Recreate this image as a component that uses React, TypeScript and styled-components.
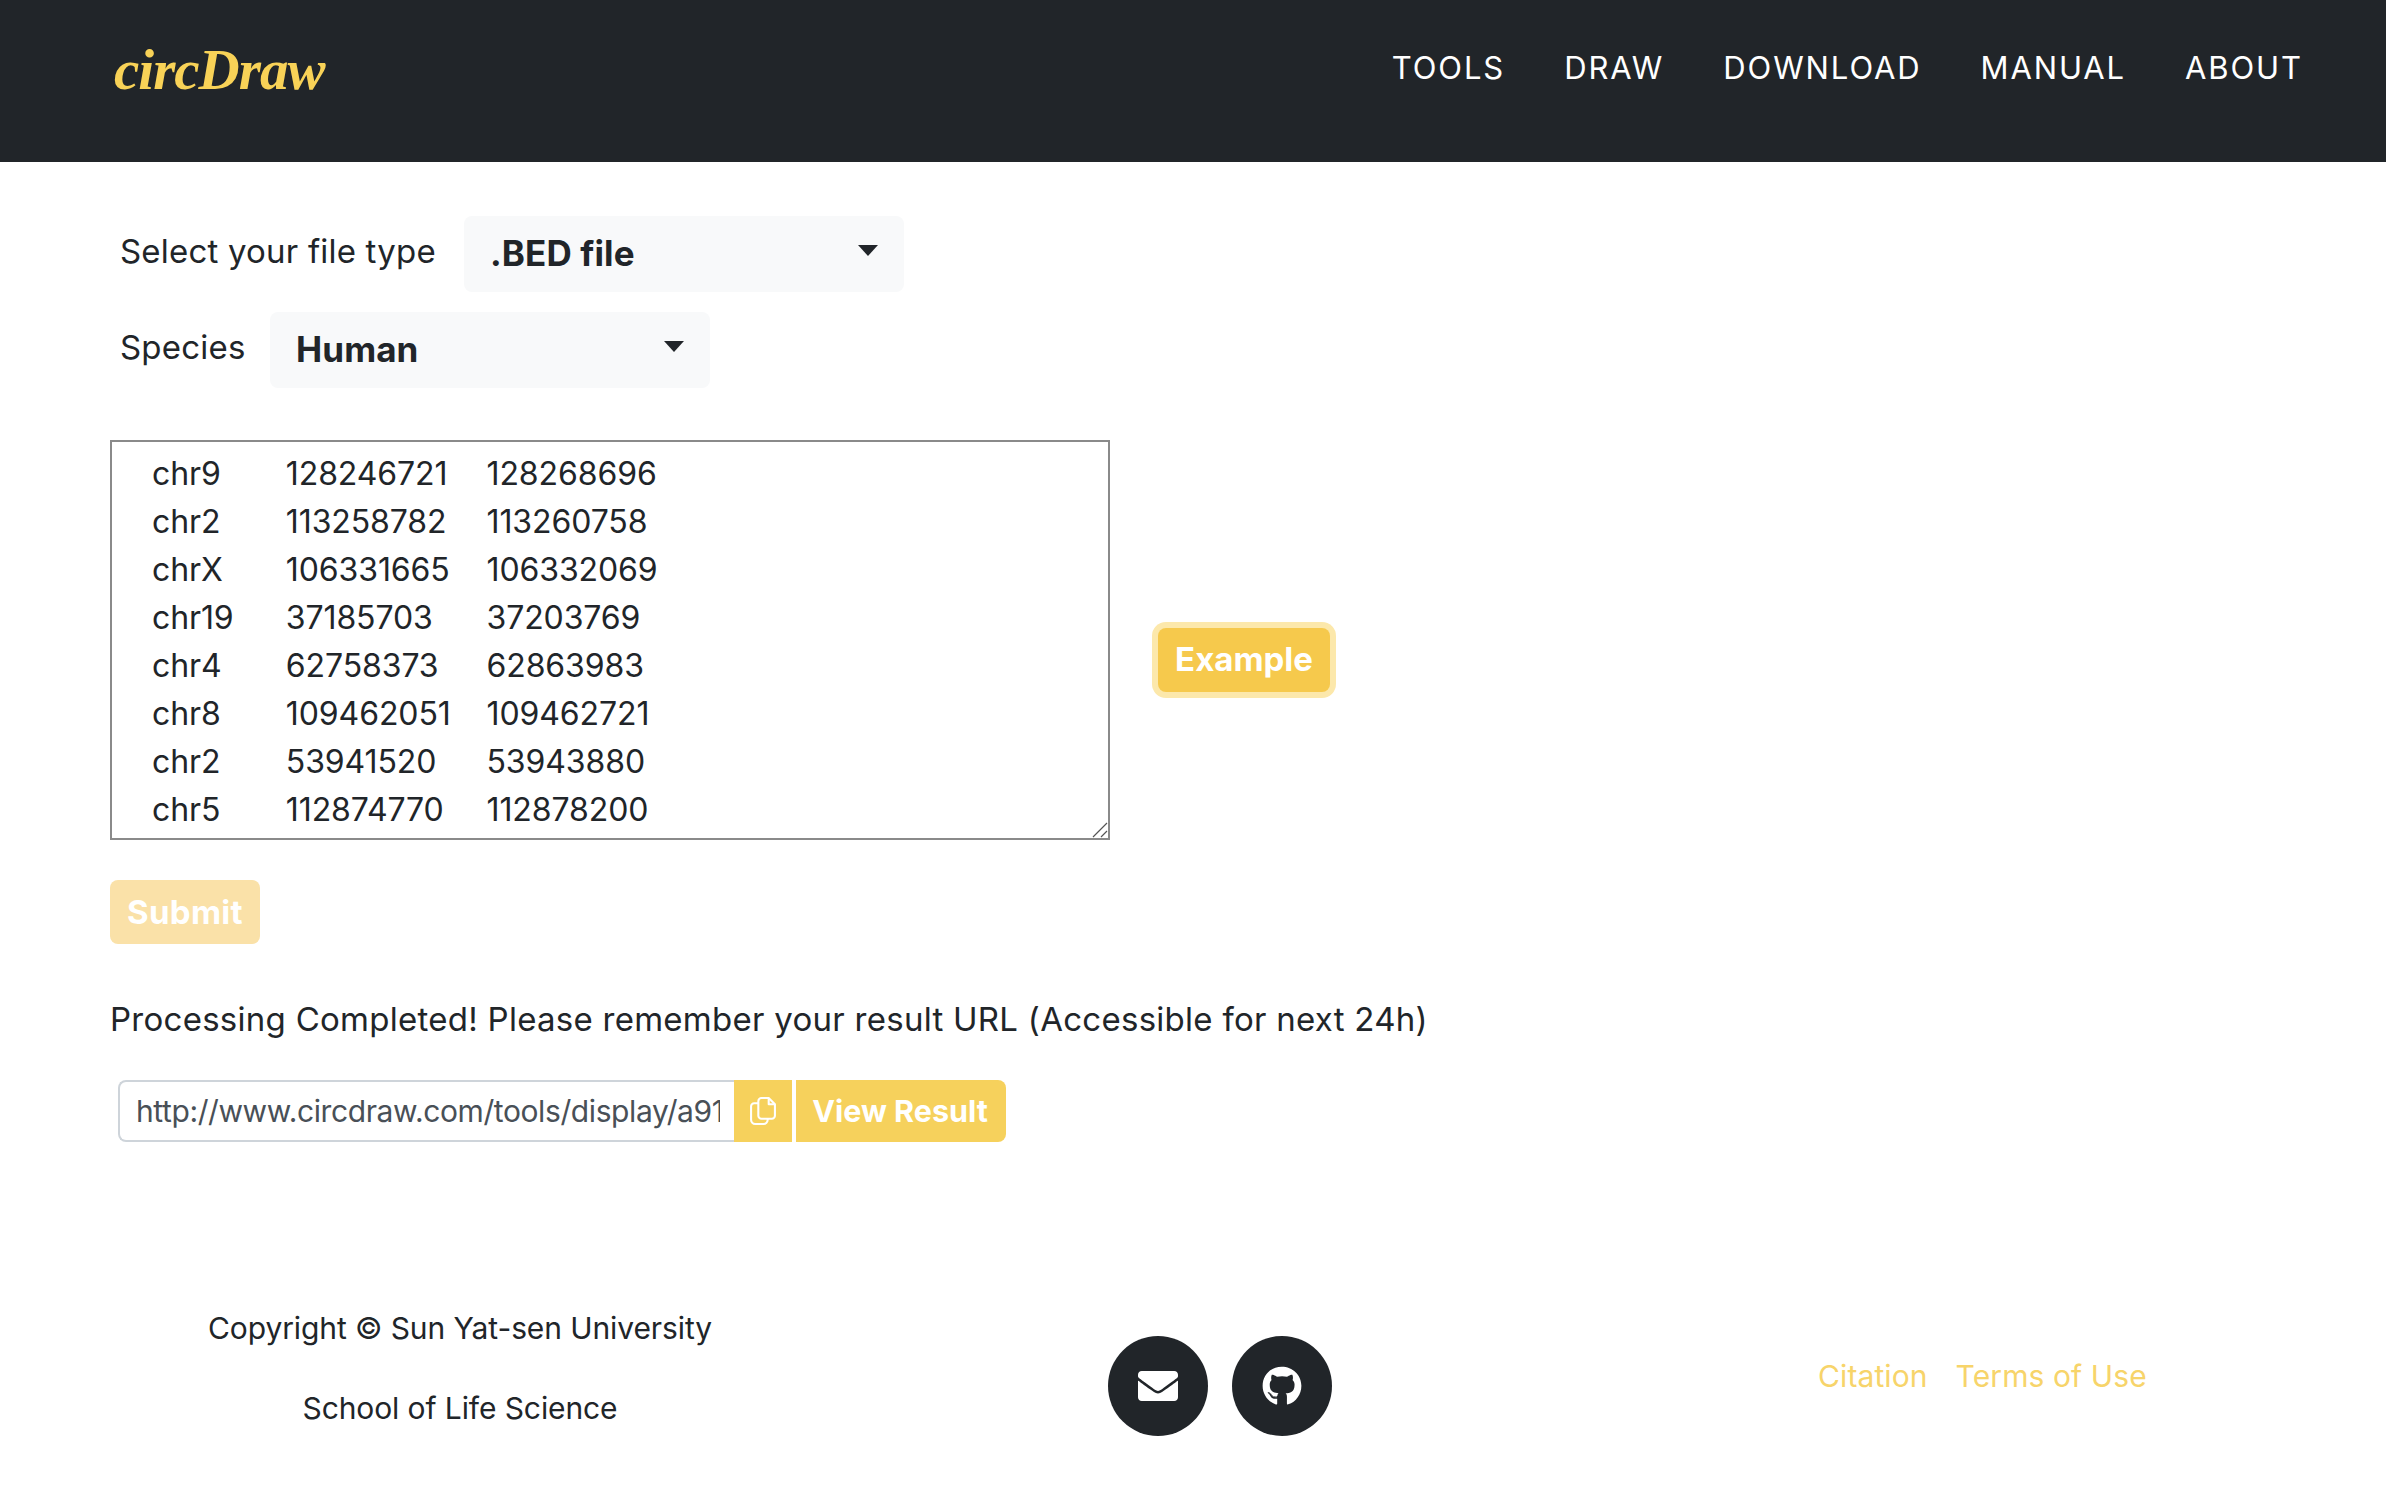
import React from "react";
import styled, { createGlobalStyle } from "styled-components";
import { FaEnvelope, FaGithub } from "react-icons/fa";

const FONT = `Inter, "Noto Sans", "Liberation Sans", sans-serif`;

const Global = createGlobalStyle`
  html, body { margin: 0; padding: 0; background: #fff; }
  body { font-family: ${FONT}; font-size: 32px; line-height: 48px; color: #212529; }
  * { box-sizing: border-box; }
`;

const Page = styled.div`
  width: 2386px;
  height: 1494px;
  overflow: hidden;
`;

const Header = styled.header`
  height: 162px;
  background: #212529;
  display: flex;
  justify-content: space-between;
  align-items: flex-start;
  padding: 40px 83px 0 114px;
`;

const Logo = styled.a`
  font-family: "Liberation Serif", serif;
  font-style: italic;
  font-weight: 700;
  font-size: 57px;
  line-height: 60px;
  letter-spacing: -1px;
  color: #f8d257;
`;

const Nav = styled.nav`
  display: flex;
  gap: 59px;
  padding-top: 4px;
`;

const NavLink = styled.a`
  font-size: 31px;
  line-height: 48px;
  letter-spacing: 1.9px;
  color: #fff;
`;

const Main = styled.main`
  padding: 54px 0 0 110px;
`;

const SelectRow = styled.div`
  display: flex;
  align-items: center;
  height: 76px;
  margin-bottom: 20px;
  padding-left: 10px;
`;

const FieldLabel = styled.label<{ $width: number }>`
  width: ${(p) => p.$width}px;
  flex: none;
  font-size: 33px;
  line-height: 48px;
  letter-spacing: 0.2px;
  position: relative;
  top: -3px;
`;

const SelectButton = styled.button`
  width: 440px;
  height: 76px;
  border: 0;
  border-radius: 8px;
  background: #f8f9fa;
  color: #212529;
  font-family: ${FONT};
  font-weight: 700;
  font-size: 35px;
  letter-spacing: 0.1px;
  display: flex;
  align-items: center;
  justify-content: space-between;
  padding: 0 26px 2px;
`;

const Caret = styled.span`
  width: 0;
  height: 0;
  border-left: 10px solid transparent;
  border-right: 10px solid transparent;
  border-top: 11px solid #212529;
  margin-top: -6px;
`;

const EditorRow = styled.div`
  display: flex;
  align-items: center;
  margin-top: 52px;
  gap: 48px;
`;

const SequenceFrame = styled.div`
  position: relative;
  width: 1000px;
  height: 400px;
  flex: none;
`;

const Sequence = styled.textarea`
  display: block;
  width: 100%;
  height: 100%;
  border: 2px solid #8a8a8a;
  border-radius: 0;
  padding: 8px 0 0 40px;
  font-family: ${FONT};
  font-size: 32px;
  line-height: 48px;
  letter-spacing: -0.1px;
  color: #212529;
  tab-size: 66.9px;
  white-space: pre;
  overflow: hidden;
  outline: none;
  background: #fff;
  resize: none;
`;

const ResizeGrip = styled.svg`
  position: absolute;
  right: 2px;
  bottom: 2px;
  width: 16px;
  height: 16px;
`;

const ExampleButton = styled.button`
  width: 172px;
  height: 64px;
  margin-top: 40px;
  border: 0;
  border-radius: 8px;
  background: #f6c94c;
  box-shadow: 0 0 0 6px #fce8ab;
  color: #fff;
  font-family: ${FONT};
  font-weight: 700;
  font-size: 33px;
  padding: 0 0 2px;
`;

const SubmitButton = styled.button`
  display: block;
  width: 150px;
  height: 64px;
  margin-top: 40px;
  border: 0;
  border-radius: 8px;
  background: #fae1a8;
  color: #fff;
  font-family: ${FONT};
  font-weight: 700;
  font-size: 33px;
  letter-spacing: 0.3px;
  padding: 0;
`;

const Notice = styled.p`
  margin: 51px 0 0;
  font-size: 33px;
  line-height: 48px;
  letter-spacing: 0.27px;
`;

const UrlGroup = styled.div`
  display: flex;
  width: 888px;
  height: 62px;
  margin: 37px 0 0 8px;
`;

const UrlInput = styled.input`
  width: 616px;
  height: 62px;
  flex: none;
  border: 2px solid #ced4da;
  border-right: 0;
  border-radius: 8px 0 0 8px;
  padding: 0 14px 0 16px;
  font-family: ${FONT};
  font-size: 30px;
  letter-spacing: -0.4px;
  color: #495057;
  outline: none;
  background: #fff;
`;

const CopyButton = styled.button`
  width: 58px;
  height: 62px;
  flex: none;
  border: 0;
  background: #f6d15c;
  color: #fff;
  padding: 0;
  display: flex;
  align-items: center;
  justify-content: center;
`;

const ResultButton = styled.button`
  width: 210px;
  height: 62px;
  flex: none;
  margin-left: 4px;
  border: 0;
  border-radius: 0 8px 8px 0;
  background: #f6d15c;
  color: #fff;
  font-family: ${FONT};
  font-weight: 700;
  font-size: 30.5px;
  padding: 0 2px 2px 0;
`;

const Footer = styled.footer`
  display: flex;
  align-items: flex-start;
  margin-top: 162px;
`;

const Credits = styled.div`
  width: 920px;
  flex: none;
  text-align: center;
`;

const CreditLine = styled.p`
  margin: 0 0 32px;
  font-size: 30px;
  line-height: 48px;
  letter-spacing: -0.1px;
`;

const Socials = styled.div`
  display: flex;
  gap: 24px;
  margin: 32px 0 0 188px;
`;

const SocialLink = styled.a`
  width: 100px;
  height: 100px;
  border-radius: 50%;
  background: #212529;
  color: #fff;
  display: flex;
  align-items: center;
  justify-content: center;
  font-size: 40px;
`;

const Links = styled.div`
  display: flex;
  gap: 28px;
  margin: 48px 0 0 486px;
`;

const FooterLink = styled.a`
  font-size: 30px;
  line-height: 48px;
  letter-spacing: 0.1px;
  color: #f7d46a;
`;

const rows = [
  ["chr9", "128246721", "128268696"],
  ["chr2", "113258782", "113260758"],
  ["chrX", "106331665", "106332069"],
  ["chr19", "37185703", "37203769"],
  ["chr4", "62758373", "62863983"],
  ["chr8", "109462051", "109462721"],
  ["chr2", "53941520", "53943880"],
  ["chr5", "112874770", "112878200"],
];

const CopyIcon = () => (
  <svg width="26" height="28" viewBox="0 0 25 27" fill="none" stroke="currentColor" strokeWidth="2" strokeLinejoin="round">
    <path d="M8 4a3 3 0 0 1 3-3h7l6 6v11a3 3 0 0 1-3 3H11a3 3 0 0 1-3-3z" />
    <path d="M18 1v6h6" />
    <path d="M8 6H4a3 3 0 0 0-3 3v13a4 4 0 0 0 4 4h8a4 4 0 0 0 4-4v-1" />
  </svg>
);

export default function App() {
  return (
    <Page>
      <Global />
      <Header>
        <Logo>circDraw</Logo>
        <Nav>
          {["TOOLS", "DRAW", "DOWNLOAD", "MANUAL", "ABOUT"].map((n) => (
            <NavLink key={n}>{n}</NavLink>
          ))}
        </Nav>
      </Header>
      <Main>
        <SelectRow>
          <FieldLabel $width={344}>Select your file type</FieldLabel>
          <SelectButton>
            .BED file
            <Caret />
          </SelectButton>
        </SelectRow>
        <SelectRow>
          <FieldLabel $width={150}>Species</FieldLabel>
          <SelectButton>
            Human
            <Caret />
          </SelectButton>
        </SelectRow>
        <EditorRow>
          <SequenceFrame>
            <Sequence defaultValue={rows.map((r) => r.join("\t")).join("\n")} spellCheck={false} />
            <ResizeGrip viewBox="0 0 16 16" fill="none" stroke="#555" strokeWidth="1.2">
              <path d="M1 15 15 1M9 15l6-6" />
            </ResizeGrip>
          </SequenceFrame>
          <ExampleButton>Example</ExampleButton>
        </EditorRow>
        <SubmitButton>Submit</SubmitButton>
        <Notice>Processing Completed! Please remember your result URL (Accessible for next 24h)</Notice>
        <UrlGroup>
          <UrlInput readOnly value="http://www.circdraw.com/tools/display/a91f3c07e2b84d56" />
          <CopyButton>
            <CopyIcon />
          </CopyButton>
          <ResultButton>View Result</ResultButton>
        </UrlGroup>
      </Main>
      <Footer>
        <Credits>
          <CreditLine>Copyright © Sun Yat-sen University</CreditLine>
          <CreditLine>School of Life Science</CreditLine>
        </Credits>
        <Socials>
          <SocialLink>
            <FaEnvelope />
          </SocialLink>
          <SocialLink>
            <FaGithub />
          </SocialLink>
        </Socials>
        <Links>
          <FooterLink>Citation</FooterLink>
          <FooterLink>Terms of Use</FooterLink>
        </Links>
      </Footer>
    </Page>
  );
}
